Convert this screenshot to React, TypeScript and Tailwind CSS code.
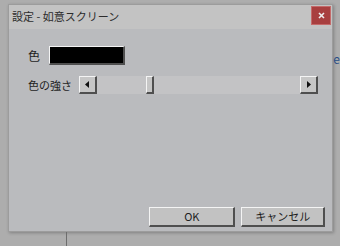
const jp = { fontFamily: '"Noto Sans CJK JP", "Noto Sans", sans-serif' };

const bevel =
  "border-t border-l border-t-[#f4f4f4] border-l-[#f4f4f4] border-b-2 border-r-2 border-b-[#4f4f4f] border-r-[#4f4f4f]";

function ArrowButton({ dir }: { dir: "left" | "right" }) {
  return (
    <div className={`w-[18px] h-[18px] bg-[#c6c6c6] flex items-center justify-center ${bevel}`}>
      <svg width="5" height="7" viewBox="0 0 5 7">
        {dir === "left" ? <path d="M4 0 L0 3.5 L4 7 Z" fill="#111" /> : <path d="M1 0 L5 3.5 L1 7 Z" fill="#111" />}
      </svg>
    </div>
  );
}

function Slider() {
  return (
    <div className="flex items-stretch w-[239px] h-[18px]">
      <ArrowButton dir="left" />
      <div className="flex-1 flex items-stretch bg-[#c3c3c5] pl-[49px]">
        <div className={`w-[8px] bg-[#c6c6c6] ${bevel}`} />
      </div>
      <ArrowButton dir="right" />
    </div>
  );
}

function PushButton({ label, width }: { label: string; width: string }) {
  return (
    <div
      className={`${width} h-[20px] bg-[#c2c2c2] flex items-center justify-center text-[11px] text-[#1e1e1e] ${bevel}`}
      style={jp}
    >
      {label}
    </div>
  );
}

export default function App() {
  return (
    <div className="w-[340px] h-[246px] bg-[#adadad] flex flex-col overflow-hidden" style={jp}>
      <div className="h-[4px]" />
      <div className="flex">
        <div className="w-[8px]" />
        <div className="w-[327px] h-[228px] flex flex-col border border-[#9c9c9c] bg-[#babbbe] shadow-[1px_1px_3px_rgba(0,0,0,0.25)]">
          <div className="h-[24px] bg-[#c3c3c3] flex items-start justify-between">
            <div className="pl-[3px] pt-[4px] text-[11px] leading-[15px] text-[#2c2c2c]">設定 - 如意スクリーン</div>
            <div className="mt-[1px] mr-[1px] w-[20px] h-[19px] bg-[#a83f3f] border border-[#c46a6a] flex items-center justify-center">
              <svg width="7" height="7" viewBox="0 0 7 7">
                <path d="M1 1 L6 6 M6 1 L1 6" stroke="#eeeeee" strokeWidth="1.6" />
              </svg>
            </div>
          </div>
          <div className="flex-1 flex flex-col pl-[19px] pr-[7px] pt-[17px] pb-[4px]">
            <div className="flex items-center gap-[9px] h-[19px]">
              <span className="w-[12px] text-[12px] text-[#1e1e1e]">色</span>
              <div className={`w-[76px] h-[19px] bg-black ${bevel}`} />
            </div>
            <div className="flex items-center gap-[7px] mt-[11px]">
              <span className="text-[11px] text-[#1e1e1e]">色の強さ</span>
              <Slider />
            </div>
            <div className="flex-1" />
            <div className="flex justify-end gap-[6px]">
              <PushButton label="OK" width="w-[86px]" />
              <PushButton label="キャンセル" width="w-[84px]" />
            </div>
          </div>
        </div>
        <div className="flex-1 pt-[48px] text-[12px] text-[#2b4f86] leading-[14px]">e</div>
      </div>
      <div className="flex flex-1">
        <div className="w-[66px]" />
        <div className="w-[1px] bg-[#6d6d6d]" />
      </div>
    </div>
  );
}
